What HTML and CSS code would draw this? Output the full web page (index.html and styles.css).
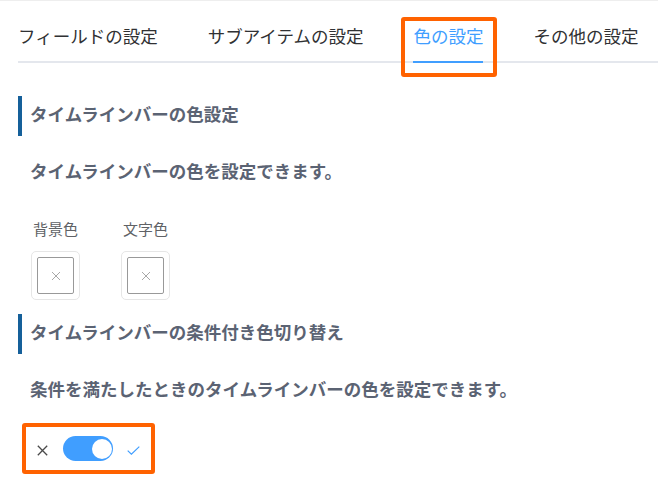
FILE: index.html
```html
<!DOCTYPE html>
<html lang="ja">
<head>
<meta charset="utf-8">
<title>色の設定</title>
<link rel="stylesheet" href="styles.css">
</head>
<body>
<div class="page">
  <nav class="tabs">
    <div class="tab">フィールドの設定</div>
    <div class="tab">サブアイテムの設定</div>
    <div class="tab active">色の設定</div>
    <div class="tab">その他の設定</div>
  </nav>
  <main class="content">
    <h2 class="heading">タイムラインバーの色設定</h2>
    <p class="desc">タイムラインバーの色を設定できます。</p>
    <div class="pickers">
      <div class="picker">
        <div class="picker-label">背景色</div>
        <div class="picker-trigger">
          <div class="picker-color">
            <svg width="10" height="10" viewBox="0 0 10 10"><path d="M1 1L9 9M9 1L1 9" stroke="#a8a8a8" stroke-width="1" fill="none"/></svg>
          </div>
        </div>
      </div>
      <div class="picker">
        <div class="picker-label">文字色</div>
        <div class="picker-trigger">
          <div class="picker-color">
            <svg width="10" height="10" viewBox="0 0 10 10"><path d="M1 1L9 9M9 1L1 9" stroke="#a8a8a8" stroke-width="1" fill="none"/></svg>
          </div>
        </div>
      </div>
    </div>
    <h2 class="heading second">タイムラインバーの条件付き色切り替え</h2>
    <p class="desc">条件を満たしたときのタイムラインバーの色を設定できます。</p>
    <div class="switch-wrap">
      <span class="switch-icon off">
        <svg width="11" height="11" viewBox="0 0 11 11"><path d="M0.8 0.8L10.2 10.2M10.2 0.8L0.8 10.2" stroke="#4a4a4a" stroke-width="1.3" fill="none"/></svg>
      </span>
      <span class="switch-core"><span class="switch-knob"></span></span>
      <span class="switch-icon on">
        <svg width="13" height="9" viewBox="0 0 13 9"><path d="M0.7 4.6L4.4 8.2L12.3 0.6" stroke="#409eff" stroke-width="1.2" fill="none"/></svg>
      </span>
    </div>
  </main>
</div>
</body>
</html>
```
FILE: styles.css
```css
html, body {
  margin: 0;
  padding: 0;
  background: #ffffff;
}

body {
  font-family: "Noto Sans CJK JP", "Noto Sans", sans-serif;
  color: #303133;
}

.page {
  border-top: 1px solid #eeeeee;
}

.tabs {
  display: flex;
  gap: 50px;
  margin: 10px 0 0 18px;
  border-bottom: 2px solid #e4e7ed;
}

.tab {
  position: relative;
  height: 50px;
  line-height: 50px;
  font-size: 17.5px;
  color: #303133;
  white-space: nowrap;
}

.tab.active {
  color: #409eff;
}

.tab.active::before {
  content: "";
  position: absolute;
  left: 0;
  right: 0;
  bottom: -2px;
  height: 2px;
  background: #409eff;
}

.tab.active::after {
  content: "";
  position: absolute;
  top: 6px;
  bottom: -16px;
  left: -12px;
  right: -14px;
  border: 4px solid #ff6200;
  border-radius: 3px;
  box-sizing: border-box;
}

.content {
  padding-left: 18px;
}

.heading {
  margin: 33px 0 0;
  height: 35px;
  padding: 0 0 5px 8px;
  border-left: 4px solid #15609a;
  line-height: 35px;
  font-size: 17.5px;
  font-weight: 700;
  color: #5b6373;
}

.heading.second {
  margin-top: 14px;
}

.desc {
  margin: 23px 0 0;
  padding-left: 12px;
  line-height: 24px;
  font-size: 17.5px;
  font-weight: 700;
  color: #5b6373;
}

.pickers {
  display: flex;
  gap: 41px;
  margin: 36px 0 0 13px;
}

.picker {
  display: flex;
  flex-direction: column;
  gap: 12px;
}

.picker-label {
  padding-left: 2px;
  line-height: 20px;
  font-size: 15px;
  color: #606266;
}

.picker-trigger {
  width: 49px;
  height: 49px;
  box-sizing: border-box;
  padding: 5px;
  border: 1px solid #e6e6e6;
  border-radius: 5px;
}

.picker-color {
  width: 100%;
  height: 100%;
  box-sizing: border-box;
  border: 1px solid #999999;
  border-radius: 2px;
  display: flex;
  align-items: center;
  justify-content: center;
}

.picker-color svg {
  display: block;
}

.switch-wrap {
  display: inline-flex;
  align-items: center;
  margin: 22px 0 0 4px;
  padding: 9px 11px 9px 10.7px;
  border: 4px solid #ff6200;
  border-radius: 3px;
}

.switch-icon {
  display: block;
  margin-top: 3px;
}

.switch-icon svg {
  display: block;
}

.switch-icon.off {
  margin-right: 15.6px;
}

.switch-icon.on {
  margin-left: 13.4px;
}

.switch-core {
  position: relative;
  display: block;
  width: 50px;
  height: 25px;
  border-radius: 12.5px;
  background: #409eff;
}

.switch-knob {
  position: absolute;
  top: 2.5px;
  right: 1.5px;
  width: 20px;
  height: 20px;
  border-radius: 50%;
  background: #ffffff;
}
```
